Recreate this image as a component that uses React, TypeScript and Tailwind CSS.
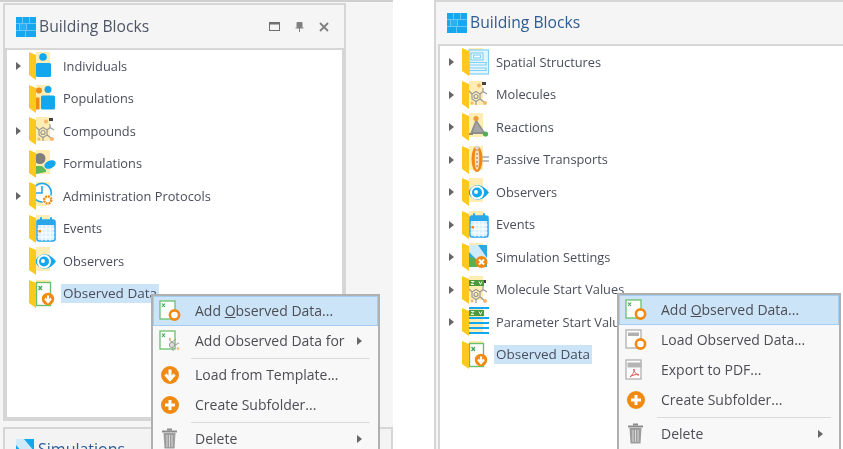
import React from "react";

const BLUE = "#12a7ee";
const ORANGE = "#f08a12";
const GREEN = "#6cbf6a";
const GREY = "#9a9a9a";

function Ic({ children }: { children?: React.ReactNode }) {
  return (
    <svg width="28" height="32" viewBox="0 0 28 32" className="shrink-0">
      <rect x="8" y="2" width="14" height="24" fill="#ffedb3" />
      {children}
      <polygon points="1,2 8,5 8,30 1,25" fill="#ffc81e" />
    </svg>
  );
}

function Molecule({ dy = 0 }: { dy?: number }) {
  return (
    <g transform={`translate(0 ${dy})`}>
      <g fill="none" stroke={GREY} strokeWidth="1.2">
        <polygon points="11,15 15,12.5 19,15 19,20 15,22.5 11,20" />
        <path d="M11 15 L8 12 M19 15 L22 12.5 L26 15 M22 12.5 L22 9 M15 22.5 L15 26 M19 20 L23 23" />
        <circle cx="15" cy="17.5" r="2" />
      </g>
      <circle cx="18" cy="6.5" r="2" fill="#f5b56a" />
      <rect x="21" y="3" width="4" height="3" fill="#444" />
      <circle cx="24" cy="24" r="2" fill="#f5b56a" />
      <circle cx="11" cy="24" r="1.5" fill="#f5b56a" />
    </g>
  );
}

function Calendar() {
  return (
    <>
      <rect x="9" y="7" width="18" height="21" rx="2" fill="#d9efff" stroke="#28a8ea" strokeWidth="1.6" />
      <rect x="9" y="7" width="18" height="5" fill="#28a8ea" />
      <rect x="12" y="4" width="2" height="5" rx="1" fill="#28a8ea" />
      <rect x="22" y="4" width="2" height="5" rx="1" fill="#28a8ea" />
      <path d="M9.5 16 H26.5 M9.5 20 H26.5 M9.5 24 H26.5 M14 12 V28 M18 12 V28 M22 12 V28" stroke="#fff" strokeWidth="1" />
      <rect x="10.5" y="17" width="2.5" height="2.5" fill={ORANGE} />
    </>
  );
}

function Eye() {
  return (
    <>
      <path d="M7 16.5 C11 8 20 6 28 16.5 C20 27 11 25 7 16.5 Z" fill="#12a7ee" />
      <circle cx="16" cy="16.5" r="7" fill="#fff" />
      <circle cx="16" cy="16.5" r="5" fill="#12a7ee" />
      <circle cx="15" cy="16" r="2" fill="#fff" />
    </>
  );
}

function ObservedDoc() {
  return (
    <>
      <rect x="8.5" y="4.5" width="14" height="23" fill="#fff" stroke={GREEN} strokeWidth="1.4" />
      <path d="M10.5 8 L14 12 M14 8 L10.5 12" stroke="#3aa655" strokeWidth="1.2" />
      <circle cx="20" cy="21" r="6.2" fill={ORANGE} />
      <path d="M20 17.5 V23 M17 20.5 L20 24 L23 20.5" stroke="#fff" strokeWidth="2.2" fill="none" />
    </>
  );
}

const icons: Record<string, React.ReactNode> = {
  individuals: (
    <>
      <circle cx="15" cy="7" r="3.8" fill={BLUE} />
      <rect x="8" y="13" width="15" height="14" rx="1.5" fill={BLUE} />
    </>
  ),
  populations: (
    <>
      <circle cx="11" cy="7.5" r="3" fill={ORANGE} />
      <circle cx="20" cy="6.5" r="3.5" fill={BLUE} />
      <rect x="8" y="14.5" width="3.5" height="12" fill={ORANGE} />
      <rect x="13" y="12.5" width="14" height="14" rx="1.5" fill={BLUE} />
    </>
  ),
  molecule: <Molecule />,
  formulations: (
    <>
      <circle cx="12" cy="10.5" r="5.5" fill="#7f7f7f" />
      <path d="M8 18 L14 18 L18 22 L18 24 L8 26 Z" fill="#5fb85c" />
      <ellipse cx="22" cy="16.5" rx="6" ry="3.8" fill={BLUE} transform="rotate(-25 22 16.5)" />
    </>
  ),
  admin: (
    <>
      <circle cx="14" cy="12.7" r="9.3" fill="#fff" stroke="#22a7ea" strokeWidth="1.6" />
      <path d="M14 6 V13 H8" stroke="#22a7ea" strokeWidth="1.6" fill="none" />
      <circle cx="19.7" cy="20" r="5.5" fill="#fff" />
      <circle cx="19.7" cy="20" r="3.6" fill="none" stroke={ORANGE} strokeWidth="2.4" strokeDasharray="2 0.8" />
    </>
  ),
  events: <Calendar />,
  observers: <Eye />,
  observed: <ObservedDoc />,
  spatial: (
    <g fill="#fff" stroke="#7fd0f5" strokeWidth="1.2">
      <rect x="8" y="4" width="19.5" height="24" fill="#e4f5fd" />
      <rect x="10" y="7" width="12" height="7" />
      <rect x="12.5" y="9" width="7" height="3" />
      <path d="M8 16.5 H25 V19 H8 M8 22 H25 V24.5 H8" fill="none" />
    </g>
  ),
  reactions: (
    <>
      <polygon points="15,8 9,23 25,23" fill="#8d8d8d" />
      <polygon points="15,11 12,21 22,21" fill="#a5a5a5" />
      <circle cx="15" cy="7.5" r="2.6" fill="#e99a3a" />
      <circle cx="24.5" cy="23" r="2.6" fill="#4fb04f" />
      <rect x="6" y="22" width="6" height="2" fill="#888" />
    </>
  ),
  passive: (
    <>
      <ellipse cx="16" cy="15" rx="5.5" ry="13" fill={ORANGE} />
      <ellipse cx="16" cy="15" rx="2.2" ry="11" fill="#fde3bd" />
      <path d="M15 6 H17 M15 10 H17 M15 14 H17 M15 18 H17 M15 22 H17" stroke="#a66" strokeWidth="1" />
      <path d="M21 13 H28 M21 17 H28" stroke="#a9a9a9" strokeWidth="1.6" />
      <circle cx="16" cy="3.5" r="2" fill="#d9d9d9" />
    </>
  ),
  settings: (
    <>
      <rect x="8" y="4" width="18" height="22" fill="#29a9e8" />
      <polygon points="8,4 17,4 26,17 26,23 20,26 14,17 8,11" fill="#cfeaf8" />
      <polygon points="8,16 14,17 20,26 8,26" fill="#59b24f" />
      <circle cx="20.5" cy="21" r="6" fill={ORANGE} />
      <path d="M18 18.5 L23 23.5 M23 18.5 L18 23.5" stroke="#fff" strokeWidth="1.8" />
    </>
  ),
  msv: (
    <>
      <Molecule dy={3} />
      <rect x="8" y="6" width="15" height="6" fill="#4c9a3c" />
      <path d="M10 7.5 H13 L10 10.5 H13 M18 7.5 L19.5 10.5 L21 7.5" stroke="#fff" strokeWidth="0.9" fill="none" />
    </>
  ),
  psv: (
    <>
      <rect x="8" y="4" width="15" height="6" fill="#4c9a3c" />
      <path d="M10 5.5 H13 L10 8.5 H13 M18 5.5 L19.5 8.5 L21 5.5" stroke="#fff" strokeWidth="0.9" fill="none" />
      <path d="M8 2 H28 M8 12 H28 M8 17 H28 M8 22 H28 M8 27 H28" stroke={BLUE} strokeWidth="2" />
    </>
  ),
};

function Bricks() {
  return (
    <svg width="20" height="20" viewBox="0 0 20 20" className="shrink-0">
      <rect width="20" height="20" fill="#6cc6f3" />
      <g fill="#15a8ef">
        <rect x="0" y="0" width="6" height="6" />
        <rect x="7" y="0" width="6" height="6" />
        <rect x="14" y="0" width="6" height="6" />
        <rect x="0" y="7" width="3" height="6" />
        <rect x="4" y="7" width="6" height="6" opacity="0.75" />
        <rect x="11" y="7" width="9" height="6" />
        <rect x="0" y="14" width="9" height="6" />
        <rect x="10" y="14" width="10" height="6" />
      </g>
    </svg>
  );
}

function Arrow() {
  return (
    <svg width="5" height="8" viewBox="0 0 5 8" className="shrink-0">
      <polygon points="0,0 5,4 0,8" fill="#666" />
    </svg>
  );
}

type Node = { label: string; icon: string; arrow?: boolean; selected?: boolean };

function Row({ node }: { node: Node }) {
  return (
    <div className="flex h-[32.5px] items-center">
      <div className="flex w-[21px] shrink-0 pl-[9px]">{node.arrow && <Arrow />}</div>
      <Ic>{icons[node.icon]}</Ic>
      <span
        className={
          node.selected
            ? "ml-[5px] bg-[#cce4f7] px-[2px] text-[13.5px] leading-[19px] whitespace-nowrap text-[#4a4e5c]"
            : "ml-[7px] text-[12.8px] leading-[19px] whitespace-nowrap text-[#4a4e5c]"
        }
      >
        {node.label}
      </span>
    </div>
  );
}

const leftNodes: Node[] = [
  { label: "Individuals", icon: "individuals", arrow: true },
  { label: "Populations", icon: "populations" },
  { label: "Compounds", icon: "molecule", arrow: true },
  { label: "Formulations", icon: "formulations" },
  { label: "Administration Protocols", icon: "admin", arrow: true },
  { label: "Events", icon: "events" },
  { label: "Observers", icon: "observers" },
  { label: "Observed Data", icon: "observed", selected: true },
];

const rightNodes: Node[] = [
  { label: "Spatial Structures", icon: "spatial", arrow: true },
  { label: "Molecules", icon: "molecule", arrow: true },
  { label: "Reactions", icon: "reactions", arrow: true },
  { label: "Passive Transports", icon: "passive", arrow: true },
  { label: "Observers", icon: "observers", arrow: true },
  { label: "Events", icon: "events", arrow: true },
  { label: "Simulation Settings", icon: "settings", arrow: true },
  { label: "Molecule Start Values", icon: "msv", arrow: true },
  { label: "Parameter Start Values", icon: "psv", arrow: true },
  { label: "Observed Data", icon: "observed", selected: true },
];

function MenuIcon({ kind }: { kind: string }) {
  const doc = (
    <>
      <rect x="1" y="1" width="15" height="18" fill="#fff" stroke={GREEN} strokeWidth="1.3" />
      <path d="M3 3.5 L6 7 M6 3.5 L3 7" stroke="#3aa655" strokeWidth="1.1" />
    </>
  );
  return (
    <svg width="22" height="22" viewBox="0 0 22 22" className="shrink-0">
      {kind === "addData" && (
        <>
          {doc}
          <circle cx="15.5" cy="15" r="4.6" fill="#fff" stroke={ORANGE} strokeWidth="2.6" />
        </>
      )}
      {kind === "addFor" && (
        <>
          {doc}
          <g stroke={GREY} strokeWidth="1" fill="#ddd">
            <circle cx="13" cy="15" r="2.6" />
            <path d="M10 10 L13 12 L17 9 M16 15 L20 13 M14 18 V21" fill="none" />
          </g>
          <circle cx="19" cy="18.5" r="1.3" fill="#f5b56a" />
          <circle cx="11" cy="9" r="1.2" fill="#f5b56a" />
        </>
      )}
      {kind === "download" && (
        <>
          <circle cx="11" cy="11" r="9" fill={ORANGE} />
          <path d="M11 5.5 V14 M6.5 10.5 L11 15.5 L15.5 10.5" stroke="#fff" strokeWidth="3" fill="none" />
        </>
      )}
      {kind === "plus" && (
        <>
          <circle cx="11" cy="11" r="9" fill={ORANGE} />
          <path d="M11 6 V16 M6 11 H16" stroke="#fff" strokeWidth="3" />
        </>
      )}
      {kind === "trash" && (
        <g transform="translate(3 0)">
          <rect x="0" y="2.5" width="15" height="2" fill="#8c8c8c" />
          <rect x="5" y="0.5" width="5" height="2" fill="#8c8c8c" />
          <path d="M1.5 5 H13.5 L12.5 20.5 H2.5 Z" fill="#9d9d9d" />
          <path d="M5 7 V19 M7.5 7 V19 M10 7 V19" stroke="#d8d8d8" strokeWidth="1" />
        </g>
      )}
      {kind === "pkml" && (
        <>
          <rect x="1" y="1" width="15" height="18" fill="#fff" stroke="#aaa" strokeWidth="1.2" />
          <rect x="3" y="3.5" width="11" height="3.5" fill="#b0b0b0" />
          <circle cx="15.5" cy="15" r="4.6" fill="#fff" stroke={ORANGE} strokeWidth="2.6" />
        </>
      )}
      {kind === "pdf" && (
        <>
          <rect x="1" y="1" width="15" height="19" fill="#fff" stroke="#aaa" strokeWidth="1.2" />
          <rect x="2.5" y="3.5" width="14" height="5" fill="#b5b5b5" />
          <path d="M5 18 C8 15 10 12 9 10 C8 12 11 15 14 16 C11 15 7 16 5 18 Z" fill="none" stroke="#d9534f" strokeWidth="1" />
        </>
      )}
    </svg>
  );
}

function Item({
  kind,
  active,
  sub,
  children,
}: {
  kind: string;
  active?: boolean;
  sub?: boolean;
  children: React.ReactNode;
}) {
  return (
    <div
      className={
        active
          ? "flex h-[30px] items-center border border-[#a3cdf1] bg-[#cce4f7] pl-[5px] pr-[15px]"
          : "flex h-[30px] items-center border border-transparent pl-[5px] pr-[15px]"
      }
    >
      <MenuIcon kind={kind} />
      <span className="mb-[1px] ml-[14px] flex-1 text-[14px] whitespace-nowrap text-[#4d4d55]">{children}</span>
      {sub && <Arrow />}
    </div>
  );
}

function Sep() {
  return <div className="my-[1.5px] ml-[38px] mr-[8px] h-[1px] bg-[#dcdcdc]" />;
}

function AddData() {
  return (
    <>
      Add <span className="underline">O</span>bserved Data...
    </>
  );
}

function PanelHeader({ blue, controls }: { blue?: boolean; controls?: boolean }) {
  return (
    <div className="flex h-[43px] items-center pl-[11px] pr-[15px]">
      <Bricks />
      <span
        className={
          blue
            ? "ml-[3px] flex-1 text-[15.7px] whitespace-nowrap text-[#2c5c96]"
            : "ml-[3px] flex-1 text-[15.7px] whitespace-nowrap text-[#4d5666]"
        }
      >
        Building Blocks
      </span>
      {controls && (
        <div className="flex items-center gap-[15px]">
          <svg width="11" height="9" viewBox="0 0 11 9">
            <rect x="0.5" y="0.5" width="10" height="8" fill="none" stroke="#707070" />
            <rect x="0.5" y="0.5" width="10" height="2" fill="#707070" />
          </svg>
          <svg width="9" height="10" viewBox="0 0 9 10">
            <path d="M2 0.5 H7 V5.5 H2 Z M0.5 6 H8.5 M4.5 6 V10" fill="#808080" stroke="#808080" />
          </svg>
          <svg width="10" height="10" viewBox="0 0 10 10">
            <path d="M1 1 L9 9 M9 1 L1 9" stroke="#808080" strokeWidth="1.8" />
          </svg>
        </div>
      )}
    </div>
  );
}

export default function App() {
  return (
    <div
      className="relative flex h-[449px] w-[843px] overflow-hidden bg-white blur-[0.35px]"
      style={{ fontFamily: '"Open Sans", "Noto Sans", sans-serif' }}
    >
      {/* left window */}
      <div className="flex h-full w-[393px] shrink-0 flex-col border-t-2 border-[#cfcfcf] bg-[#f5f5f5] pt-[1px] pl-[3px]">
        <div className="flex h-[418px] w-[343px] shrink-0 flex-col border-2 border-[#d6d6d6]">
          <PanelHeader controls />
          <div className="flex-1 border-2 border-[#d6d6d6] bg-white">
            {leftNodes.map((n) => (
              <Row key={n.label} node={n} />
            ))}
          </div>
        </div>
        <div className="mt-[6px] flex-1 border-2 border-b-0 border-[#d6d6d6] bg-[#f3f3f3] pl-[11px] pt-[10px]">
          <div className="flex items-start">
            <svg width="18" height="18" viewBox="0 0 18 18" className="shrink-0">
              <rect width="18" height="18" fill={BLUE} />
              <polygon points="0,0 8,0 18,12 18,18 10,18 0,6" fill="#cfeaf8" />
            </svg>
            <span className="ml-[4px] text-[16px] leading-[20px] text-[#2c5c96]">Simulations</span>
          </div>
        </div>
      </div>

      {/* right window */}
      <div className="ml-[41px] flex h-full flex-1 flex-col border-t-2 border-l-2 border-[#d6d6d6] bg-[#f5f5f5]">
        <div className="-mt-[1px]">
          <PanelHeader blue />
        </div>
        <div className="ml-[2px] flex-1 border-t-2 border-l-2 border-[#d6d6d6] bg-white">
          {rightNodes.map((n) => (
            <Row key={n.label} node={n} />
          ))}
        </div>
      </div>

      {/* left context menu */}
      <div className="absolute top-[294px] left-[151px] w-[229px] border-2 border-b-0 border-[#b0b0b0] bg-[#f8f8f8]">
        <Item kind="addData" active>
          <AddData />
        </Item>
        <Item kind="addFor" sub>
          Add Observed Data for
        </Item>
        <Sep />
        <Item kind="download">Load from Template...</Item>
        <Item kind="plus">Create Subfolder...</Item>
        <Sep />
        <Item kind="trash" sub>
          Delete
        </Item>
      </div>

      {/* right context menu */}
      <div className="absolute top-[293px] left-[617px] w-[224px] border-2 border-b-0 border-[#b0b0b0] bg-[#f8f8f8]">
        <Item kind="addData" active>
          <AddData />
        </Item>
        <Item kind="pkml">Load Observed Data...</Item>
        <Item kind="pdf">Export to PDF...</Item>
        <Item kind="plus">Create Subfolder...</Item>
        <Sep />
        <Item kind="trash" sub>
          Delete
        </Item>
      </div>
    </div>
  );
}
